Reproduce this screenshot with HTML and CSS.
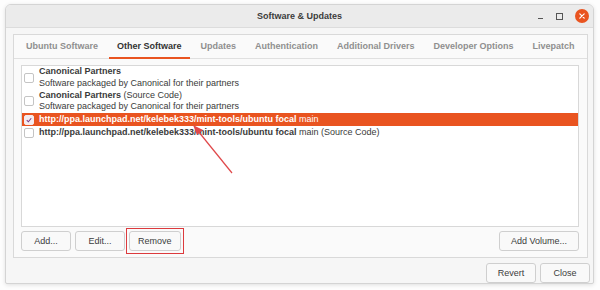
FILE: index.html
```html
<!DOCTYPE html>
<html>
<head>
  <title>Software &amp; Updates</title>
  <link rel="stylesheet" href="styles.css">
</head>
<body>
  <div class="window">
    <div class="titlebar">
      <span></span>
      <span class="title">Software &amp; Updates</span>
      <div class="controls">
        <span class="ctl-min"></span>
        <span class="ctl-max"></span>
        <span class="ctl-close">
          <svg width="14" height="14" viewBox="0 0 14 14">
            <circle cx="7" cy="7" r="7" fill="#e95420"/>
            <path d="M4.8 4.8 L9.2 9.2 M9.2 4.8 L4.8 9.2" stroke="#fff" stroke-width="1.2" stroke-linecap="round"/>
          </svg>
        </span>
      </div>
    </div>

    <div class="content">
      <div class="notebook">
        <div class="tabs">
          <span class="tab">Ubuntu Software</span>
          <span class="tab active">Other Software</span>
          <span class="tab">Updates</span>
          <span class="tab">Authentication</span>
          <span class="tab">Additional Drivers</span>
          <span class="tab">Developer Options</span>
          <span class="tab">Livepatch</span>
        </div>
        <div class="page">
          <div class="list">
            <div class="row two">
              <span class="check"></span>
              <div class="label">
                <b>Canonical Partners</b><br>
                Software packaged by Canonical for their partners
              </div>
            </div>
            <div class="row two">
              <span class="check"></span>
              <div class="label">
                <b>Canonical Partners</b> (Source Code)<br>
                Software packaged by Canonical for their partners
              </div>
            </div>
            <div class="row selected">
              <span class="check checked">
                <svg width="10" height="10" viewBox="0 0 10 10">
                  <path d="M2.2 5.2 L4.2 7.2 L7.8 2.8" fill="none" stroke="#7b3c86" stroke-width="1.3"/>
                </svg>
              </span>
              <div class="label"><b>http://ppa.launchpad.net/kelebek333/mint-tools/ubuntu focal</b> main</div>
            </div>
            <div class="row">
              <span class="check"></span>
              <div class="label"><b>http://ppa.launchpad.net/kelebek333/mint-tools/ubuntu focal</b> main (Source Code)</div>
            </div>
          </div>
          <div class="list-buttons">
            <button class="btn">Add...</button>
            <button class="btn">Edit...</button>
            <button class="btn marked">Remove</button>
            <span class="spacer"></span>
            <button class="btn wide">Add Volume...</button>
          </div>
        </div>
      </div>
      <div class="dialog-buttons">
        <button class="btn">Revert</button>
        <button class="btn">Close</button>
      </div>
    </div>
  </div>

  <!-- annotation arrow pointing at the selected source -->
  <svg class="arrow" width="600" height="290" viewBox="0 0 600 290">
    <line x1="232" y1="173" x2="198" y2="131" stroke="#e0484a" stroke-width="1.2"/>
    <polygon points="193,125 203,130 197,135" fill="#e0484a"/>
  </svg>
</body>
</html>
```

FILE: styles.css
```css
body {
  margin: 0;
  padding: 4px 6px 6px 5px;
  background: #fdfdfd;
  font-family: "Liberation Sans", Arial, sans-serif;
  font-size: 9px;
  color: #333;
}
.window {
  width: 589px;
  height: 280px;
  display: flex;
  flex-direction: column;
  background: #f6f6f6;
  border: 1px solid #d4d4d4;
  border-radius: 6px 6px 2px 2px;
  box-sizing: border-box;
  box-shadow: 0 1px 4px rgba(0, 0, 0, 0.12);
  overflow: hidden;
}
.titlebar {
  height: 22px;
  display: grid;
  grid-template-columns: 1fr auto 1fr;
  align-items: center;
  background: #ebebeb;
  border-bottom: 1px solid #dcdcdc;
}
.title {
  font-weight: bold;
  color: #3c3c3c;
}
.controls {
  display: flex;
  align-items: center;
  justify-content: flex-end;
  gap: 13px;
  padding-right: 4px;
}
.ctl-min {
  width: 5px;
  height: 1px;
  margin-top: 4px;
  background: #555;
}
.ctl-max {
  width: 5px;
  height: 5px;
  border: 1px solid #555;
}
.ctl-close {
  display: flex;
  margin-left: -1px;
}
.content {
  flex: 1;
  display: flex;
  flex-direction: column;
  padding: 6px 5px 0 7px;
}
.notebook {
  height: 224px;
  display: flex;
  flex-direction: column;
  background: #fafafa;
  border: 1px solid #d9d9d9;
  box-sizing: border-box;
}
.tabs {
  height: 23px;
  display: flex;
  gap: 3px;
  padding-left: 4px;
  border-bottom: 1px solid #e0e0e0;
  white-space: nowrap;
}
.tab {
  display: flex;
  align-items: center;
  padding: 0 8px;
  font-weight: bold;
  color: #8f8f8f;
  border-bottom: 2px solid transparent;
  margin-bottom: -1px;
}
.tab.active {
  color: #333;
  border-bottom-color: #e95420;
}
.page {
  flex: 1;
  display: flex;
  flex-direction: column;
  padding: 6px 8px 6px 7px;
}
.list {
  flex: 1;
  background: #fff;
  border: 1px solid #d8d8d8;
}
.row {
  display: flex;
  align-items: center;
  gap: 5px;
  padding-left: 2px;
  line-height: 13px;
  color: #3a3a3a;
  white-space: nowrap;
}
.row.two {
  line-height: 11.5px;
  padding: 0.25px 0 0.25px 2px;
}
.row.selected {
  background: #e95420;
  color: #fff;
}
.check {
  width: 8px;
  height: 8px;
  border: 1px solid #c4c4c4;
  border-radius: 2px;
  background: #fff;
  flex-shrink: 0;
  display: flex;
  align-items: center;
  justify-content: center;
}
.check.checked {
  background: #f4ecf0;
  border-color: #f4ecf0;
}
.list-buttons {
  display: flex;
  gap: 4px;
  margin-top: 4px;
}
.spacer {
  flex: 1;
}
.btn {
  height: 20px;
  min-width: 50px;
  padding: 0 8px;
  font-family: "Liberation Sans", Arial, sans-serif;
  font-size: 9px;
  color: #3c3c3c;
  background: #f9f9f9;
  border: 1px solid #cfcfcf;
  border-radius: 3px;
}
.btn.wide {
  width: 80px;
}
.btn.marked {
  position: relative;
}
/* red annotation box around the Remove button */
.btn.marked::after {
  content: "";
  position: absolute;
  inset: -4px -4px -4px -4px;
  border: 1.5px solid #dc3a3d;
}
.dialog-buttons {
  display: flex;
  justify-content: flex-end;
  gap: 4px;
  margin-top: 5px;
  margin-right: -2px;
}
.arrow {
  position: absolute;
  left: 0;
  top: 0;
  pointer-events: none;
}
```
